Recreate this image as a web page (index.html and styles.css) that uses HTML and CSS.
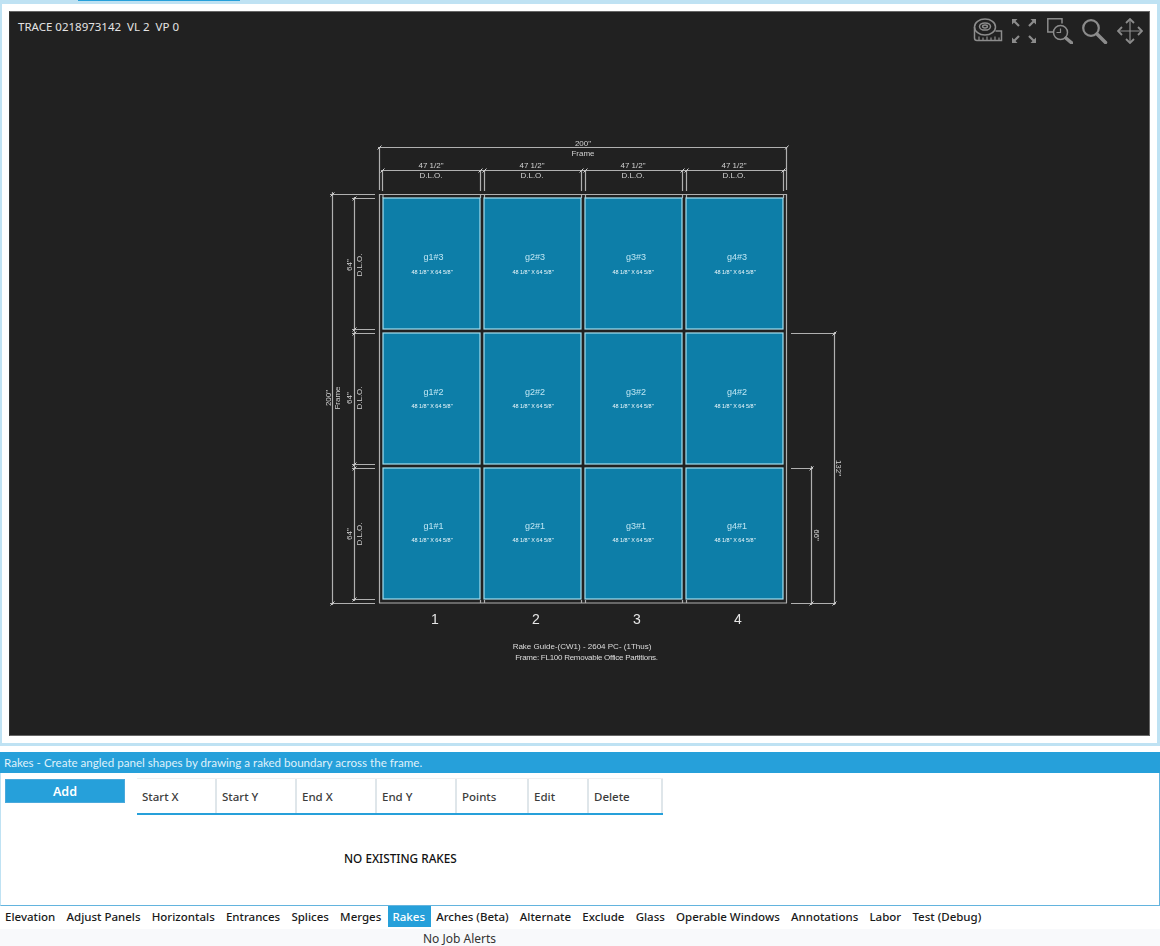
FILE: index.html
```html
<!DOCTYPE html>
<html lang="en">
<head>
<meta charset="utf-8">
<title>Rakes</title>
<link rel="stylesheet" href="styles.css">
</head>
<body>
<div class="top-strip"><div class="top-tab"></div></div>
<section class="viewer">
  <div class="canvas">
    <div class="trace">TRACE 0218973142&nbsp; VL 2&nbsp; VP 0</div>
    <div class="tools">
      <svg class="tool tape" viewBox="0 0 30 26"><ellipse cx="12" cy="9" rx="10.500" ry="8"/><ellipse cx="12" cy="8.500" rx="5.500" ry="3.600"/><ellipse cx="12" cy="8.500" rx="2.400" ry="1.400"/><path d="M1.500 9v11a2.500 2.500 0 0 0 2.500 2.500h24.500v-9.500h-6"/><path d="M6 22.500v-4M10 22.500v-3M14 22.500v-4M18 22.500v-3M22 22.500v-4M26 22.500v-3" class="thin"/></svg>
      <svg class="tool expand" viewBox="0 0 24 24"><path class="fill" d="M0 0h5.500l-5.500 5.500zM24 0v5.500l-5.500-5.500zM0 24v-5.500l5.500 5.500zM24 24h-5.500l5.500-5.500z"/><path class="arrowstem" d="M2 2l5 5M22 2l-5 5M2 22l5-5M22 22l-5-5"/></svg>
      <svg class="tool win" viewBox="0 0 26 26"><path d="M6 14H0.800V0.800H15V5.500"/><circle cx="13.500" cy="14.500" r="7"/><path d="M13.500 10.500v4h-4" class="thin"/><path d="M18.800 20l6 5" class="heavy"/></svg>
      <svg class="tool mag" viewBox="0 0 26 26"><circle cx="9" cy="10" r="7.800" class="mid"/><path d="M15 16l8.500 8.500" class="heavy"/></svg>
      <svg class="tool move" viewBox="0 0 26 26"><path d="M13 1v24M1 13h24" class="thin"/><path d="M9 5L13 1l4 4M9 21L13 25l4-4M5 9L1 13l4 4M21 9L25 13l-4 4"/></svg>
    </div>
    <svg class="drawing" viewBox="9 11 1141 726">
      <g class="lines">
        <path d="M379 194.500H787M379 603H787M379.500 194V603M786.500 194V603"/>
        <path d="M378 147.500H787M379.500 147V190M786.500 147V190"/>
        <path d="M381 170.500H786M382.500 170V191M480.500 170V191M484.500 170V191M581.500 170V191M585.500 170V191M682.500 170V191M686.500 170V191M783.500 170V191"/>
        <path d="M480.500 600V603M484.500 600V603M581.500 600V603M585.500 600V603M682.500 600V603M686.500 600V603M383 194.500V198M480.500 194V198M484.500 194V198M581.500 194V198M585.500 194V198M682.500 194V198M686.500 194V198M783.500 194V198"/>
        <path d="M330 194.500H375M330 603.500H375M332.500 192V605"/>
        <path d="M352 198.500H375M352 329.500H375M352 333.500H375M352 464.500H375M352 468.500H375M352 599.500H375M354.500 197V601"/>
        <path d="M791 333.500H836M791 603.500H836M834.500 332V605"/>
        <path d="M791 468.500H813M811.500 466V605"/>
        <path class="ticks" d="M377.500 149.500l4-4M785 149.500l3.500-4M380.500 172.500l4-4M478.500 172.500l4-4M482.500 172.500l4-4M579.500 172.500l4-4M583.500 172.500l4-4M680.500 172.500l4-4M684.500 172.500l4-4M781.500 172.500l4-4M330.500 196.500l4-4M330.500 605.500l4-4M352.500 200.500l4-4M352.500 331.500l4-4M352.500 335.500l4-4M352.500 466.500l4-4M352.500 470.500l4-4M352.500 601.500l4-4M832.500 335.500l4-4M832.500 605.500l4-4M809.500 470.500l4-4M809.500 605.500l4-4"/>
      </g>
      <g class="glass">
        <rect x="383" y="198" width="97" height="131"/><rect x="484" y="198" width="97" height="131"/><rect x="585" y="198" width="97" height="131"/><rect x="686" y="198" width="97" height="131"/>
        <rect x="383" y="333" width="97" height="131"/><rect x="484" y="333" width="97" height="131"/><rect x="585" y="333" width="97" height="131"/><rect x="686" y="333" width="97" height="131"/>
        <rect x="383" y="468" width="97" height="131"/><rect x="484" y="468" width="97" height="131"/><rect x="585" y="468" width="97" height="131"/><rect x="686" y="468" width="97" height="131"/>
      </g>
      <g class="dim">
        <text x="583" y="146">200"</text><text x="583" y="156">Frame</text>
        <text x="431" y="168">47 1/2"</text><text x="431" y="178">D.L.O.</text>
        <text x="532" y="168">47 1/2"</text><text x="532" y="178">D.L.O.</text>
        <text x="633" y="168">47 1/2"</text><text x="633" y="178">D.L.O.</text>
        <text x="734" y="168">47 1/2"</text><text x="734" y="178">D.L.O.</text>
        <text transform="translate(352 265) rotate(-90)">64"</text><text transform="translate(362 265) rotate(-90)">D.L.O.</text>
        <text transform="translate(352 398) rotate(-90)">64"</text><text transform="translate(362 398) rotate(-90)">D.L.O.</text>
        <text transform="translate(352 534) rotate(-90)">64"</text><text transform="translate(362 534) rotate(-90)">D.L.O.</text>
        <text transform="translate(331 398) rotate(-90)">200"</text><text transform="translate(340 398) rotate(-90)">Frame</text>
        <text transform="translate(836 468) rotate(90)">132"</text>
        <text transform="translate(814 535) rotate(90)">66"</text>
      </g>
      <g class="gname">
        <text x="433.500" y="260">g1#3</text><text x="535" y="260">g2#3</text><text x="636" y="260">g3#3</text><text x="737" y="260">g4#3</text>
        <text x="433.500" y="394.500">g1#2</text><text x="535" y="394.500">g2#2</text><text x="636" y="394.500">g3#2</text><text x="737" y="394.500">g4#2</text>
        <text x="433.500" y="529">g1#1</text><text x="535" y="529">g2#1</text><text x="636" y="529">g3#1</text><text x="737" y="529">g4#1</text>
      </g>
      <g class="gsize">
        <text x="432" y="274">48 1/8" X 64 5/8"</text><text x="533" y="274">48 1/8" X 64 5/8"</text><text x="633" y="274">48 1/8" X 64 5/8"</text><text x="735" y="274">48 1/8" X 64 5/8"</text>
        <text x="432" y="408">48 1/8" X 64 5/8"</text><text x="533" y="408">48 1/8" X 64 5/8"</text><text x="633" y="408">48 1/8" X 64 5/8"</text><text x="735" y="408">48 1/8" X 64 5/8"</text>
        <text x="432" y="542">48 1/8" X 64 5/8"</text><text x="533" y="542">48 1/8" X 64 5/8"</text><text x="633" y="542">48 1/8" X 64 5/8"</text><text x="735" y="542">48 1/8" X 64 5/8"</text>
      </g>
      <g class="num">
        <text x="435" y="624">1</text><text x="536" y="624">2</text><text x="637" y="624">3</text><text x="738" y="624">4</text>
      </g>
      <g class="caption">
        <text x="582" y="649">Rake Guide-(CW1) - 2604 PC-  (1Thus)</text>
        <text class="narrow" x="586.500" y="659.500">Frame: FL100 Removable Office Partitions.</text>
      </g>
    </svg>
  </div>
</section>
<section class="panel">
  <div class="panel-title">Rakes - Create angled panel shapes by drawing a raked boundary across the frame.</div>
  <div class="panel-body">
    <button class="add" type="button">Add</button>
    <div class="grid-head">
      <div class="col w80">Start X</div>
      <div class="col w80">Start Y</div>
      <div class="col w80">End X</div>
      <div class="col w80">End Y</div>
      <div class="col w72">Points</div>
      <div class="col w60">Edit</div>
      <div class="col w74">Delete</div>
    </div>
    <div class="empty">NO EXISTING RAKES</div>
  </div>
</section>
<nav class="tabs">
  <span class="tab">Elevation</span>
  <span class="tab">Adjust Panels</span>
  <span class="tab">Horizontals</span>
  <span class="tab">Entrances</span>
  <span class="tab">Splices</span>
  <span class="tab">Merges</span>
  <span class="tab active">Rakes</span>
  <span class="tab">Arches (Beta)</span>
  <span class="tab">Alternate</span>
  <span class="tab">Exclude</span>
  <span class="tab">Glass</span>
  <span class="tab">Operable Windows</span>
  <span class="tab">Annotations</span>
  <span class="tab">Labor</span>
  <span class="tab">Test (Debug)</span>
</nav>
<footer class="status">No Job Alerts</footer>
</body>
</html>
```

FILE: styles.css
```css
* { box-sizing: border-box; }
html, body { margin: 0; padding: 0; }
body {
  width: 1160px;
  height: 946px;
  overflow: hidden;
  background: #fff;
  font-family: "Noto Sans", "Open Sans", sans-serif;
  display: flex;
  flex-direction: column;
}
.top-strip { flex: none; height: 1px; padding-left: 78px; background: #bfe2f3; }
.top-tab { width: 162px; height: 1px; background: #26a0da; }
.viewer {
  flex: none;
  height: 745px;
  border: 3px solid #bfe2f3;
  border-left-width: 2px;
  padding: 7px;
  background: #fff;
  display: flex;
}
.canvas {
  position: relative;
  flex: 1;
  background: #212121;
  border: 1px solid #666;
  border-left-color: #333;
  overflow: hidden;
}
.trace {
  position: absolute;
  left: 8px;
  top: 7px;
  font-size: 11.500px;
  line-height: 16px;
  color: #e4e4e4;
}
.tools {
  position: absolute;
  top: 6px;
  right: 6px;
  display: flex;
  gap: 9px;
  align-items: flex-start;
}
.tool { width: 26px; height: 26px; display: block; fill: none; stroke: #8c8c8c; stroke-width: 1.500; }
.tool.tape { width: 30px; }
.tool.expand { width: 24px; height: 24px; margin: 1px 2px 0 0; }
.tool.move { stroke-width: 1.800; }
.tool .thin { stroke-width: 1.200; }
.tool .mid { stroke-width: 2.200; }
.tool .heavy { stroke-width: 3.500; stroke-linecap: round; }
.tool .fill { fill: #8c8c8c; stroke: none; }
.tool .arrowstem { stroke-width: 2.200; }
.drawing { display: block; width: 1141px; height: 726px; margin: -1px 0 0 -1px; filter: blur(0.3px); }
.drawing text { text-anchor: middle; font-family: "Liberation Sans", Arial, sans-serif; }
.glass rect { fill: #0d7ea8; stroke: #a4dff0; stroke-width: 1.200; }
.lines path { fill: none; stroke: #b0b0b0; stroke-width: 1.200; }
.lines .ticks { stroke: #d0d0d0; stroke-width: 1; }
.dim text { font-size: 8px; fill: #d2d2d2; }
.gname text { font-size: 9px; fill: #bfe6f3; }
.gsize text { font-size: 5.500px; fill: #eef8fb; }
.num text { font-size: 14px; fill: #e6e6e6; }
.caption text { font-size: 8px; fill: #dcdcdc; }
.caption .narrow { letter-spacing: -0.27px; }
.panel { flex: none; margin-top: 6px; height: 154px; display: flex; flex-direction: column; }
.panel-title {
  flex: none;
  height: 21px;
  padding-left: 4px;
  background: #26a0da;
  color: #dff1fa;
  font-family: "Lato", sans-serif;
  font-size: 11.600px;
  line-height: 21px;
}
.panel-body {
  position: relative;
  flex: 1;
  border: 1px solid #63b4de;
  border-top: 0;
  border-left-color: #bfe2f3;
  padding: 6px 0 0 4px;
  display: flex;
  align-items: flex-start;
  gap: 12px;
}
.add {
  width: 120px;
  height: 24px;
  padding: 0;
  border: 1px solid #4aa9dc;
  background: #26a0da;
  color: #fff;
  font: 600 12.500px "Noto Sans", sans-serif;
}
.grid-head {
  display: flex;
  height: 36px;
  border-bottom: 2px solid #26a0da;
  background: #fff;
  box-shadow: 0 -1px 0 #f0f0f0;
}
.col {
  padding-left: 5px;
  border-right: 2px solid #dfe6ea;
  font-size: 11.500px;
  font-weight: 500;
  line-height: 35px;
  color: #3c3c3c;
}
.w80 { width: 80px; }
.w72 { width: 72px; }
.w60 { width: 60px; }
.w74 { width: 74px; }
.empty {
  position: absolute;
  left: 343px;
  top: 76px;
  font-size: 11.750px;
  font-weight: 500;
  line-height: 18px;
  color: #111;
}
.tabs { flex: none; height: 23px; display: flex; background: #fff; }
.tab {
  height: 21px;
  padding: 0 6.200px 0 5px;
  font-size: 11.500px;
  font-weight: 500;
  line-height: 21px;
  color: #1a1a1a;
  white-space: nowrap;
}
.tab.active { background: #26a0da; color: #fff; }
.status {
  flex: none;
  height: 17px;
  overflow: hidden;
  padding-left: 423px;
  background: #f8f9fb;
  font-size: 12px;
  line-height: 20px;
  color: #333;
}
```
